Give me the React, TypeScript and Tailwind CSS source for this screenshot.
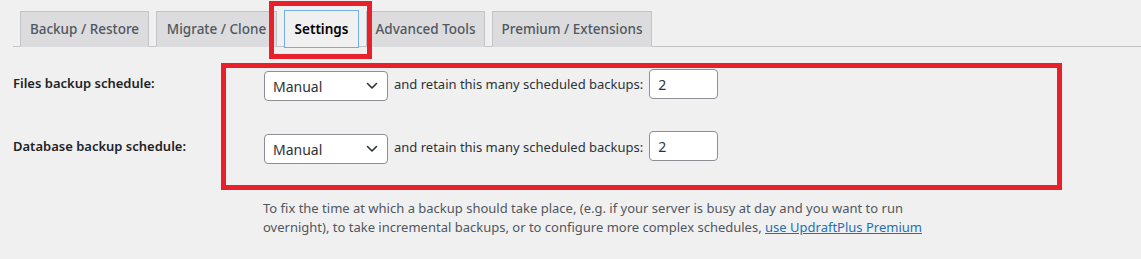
import React from 'react'

const font = { fontFamily: '"Segoe UI", "Noto Sans", "Open Sans", sans-serif' }

const tabs = [
  { label: 'Backup / Restore', w: 'w-[129px]' },
  { label: 'Migrate / Clone', w: 'w-[121px]' },
  { label: 'Settings', w: 'w-[75px]', active: true },
  { label: 'Advanced Tools', w: 'w-[119px]' },
  { label: 'Premium / Extensions', w: 'w-[160px]' },
]

function Chevron() {
  return (
    <svg width="12" height="8" viewBox="0 0 12 8" fill="none" className="shrink-0">
      <path d="M1.5 1.5 L6 6 L10.5 1.5" stroke="#2c3338" strokeWidth="1.6" strokeLinecap="round" strokeLinejoin="round" />
    </svg>
  )
}

function ScheduleRow({ label, inputShift }: { label: string; inputShift: string }) {
  return (
    <div className="flex h-[63px] items-start">
      <div className="w-[251px] pt-[5px] text-[13px] font-semibold text-[#1d2327]">{label}</div>
      <div className="flex items-start text-[13px] text-[#2c3338]">
        <div className="mt-[2px] flex h-[30px] w-[124px] items-center justify-between rounded-[4px] border border-[#8c8f94] bg-white pl-[8px] pr-[9px] text-[14px]">
          <span>Manual</span>
          <Chevron />
        </div>
        <span className="ml-[6px] mt-[6px] whitespace-nowrap">and retain this many scheduled backups:</span>
        <div className={`ml-[6px] flex h-[30px] w-[69px] items-center rounded-[4px] border border-[#8c8f94] bg-white pl-[8px] text-[14px] ${inputShift}`}>
          2
        </div>
      </div>
    </div>
  )
}

export default function App() {
  return (
    <div className="relative h-[259px] w-[1141px] overflow-hidden bg-[#f0f0f1]" style={font}>
      <div className="pl-[13px] pt-[11px]">
        {/* tabs */}
        <div className="flex h-[36px] items-start gap-[7px] border-b border-[#c3c4c7] pl-[7px]">
          {tabs.map((t) => (
            <div
              key={t.label}
              className={
                t.active
                  ? `${t.w} -mt-[1px] flex h-[38px] items-center justify-center border border-[#72aee6] bg-[#f0f0f1] text-[13.5px] font-semibold text-black`
                  : `${t.w} flex h-[36px] items-center justify-center border border-b-0 border-[#c3c4c7] bg-[#dcdcde] text-[13.5px] font-medium text-[#50575e]`
              }
            >
              {t.label}
            </div>
          ))}
        </div>

        {/* schedule rows */}
        <div className="pt-[22px]">
          <ScheduleRow label="Files backup schedule:" inputShift="mt-0" />
          <ScheduleRow label="Database backup schedule:" inputShift="-mt-[1px]" />
        </div>

        <p className="ml-[250px] mt-[4px] text-[13px] leading-[19px] text-[#50575e]">
          To fix the time at which a backup should take place, (e.g. if your server is busy at day and you want to run
          <br />
          overnight), to take incremental backups, or to configure more complex schedules,{' '}
          <a className="text-[#2271b1] underline">use UpdraftPlus Premium</a>
        </p>
      </div>

      {/* annotation boxes */}
      <div className="absolute left-[269px] top-[1px] h-[58px] w-[103px] border-[5px] border-[#e8202a]" />
      <div className="absolute left-[221px] top-[63px] h-[127px] w-[841px] border-[5px] border-[#e8202a]" />
    </div>
  )
}
